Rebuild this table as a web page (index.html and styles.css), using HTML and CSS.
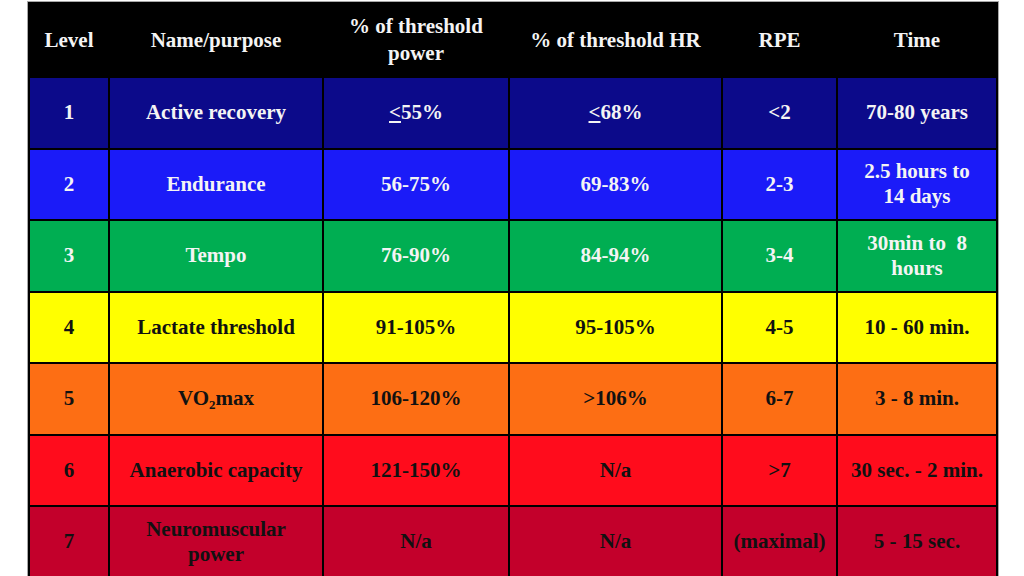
FILE: index.html
```html
<!DOCTYPE html>
<html lang="en">
<head>
<meta charset="utf-8">
<title>Training levels</title>
<link rel="stylesheet" href="styles.css">
</head>
<body>
<div class="frame">
<table class="zones">
<colgroup>
<col class="c-level"><col class="c-name"><col class="c-power"><col class="c-hr"><col class="c-rpe"><col class="c-time">
</colgroup>
<thead>
<tr class="head">
<th>Level</th><th>Name/purpose</th><th>% of threshold<br>power</th><th>% of threshold HR</th><th>RPE</th><th>Time</th>
</tr>
</thead>
<tbody>
<tr class="z1"><td>1</td><td>Active recovery</td><td><u>&lt;</u>55%</td><td><u>&lt;</u>68%</td><td>&lt;2</td><td>70-80 years</td></tr>
<tr class="z2"><td>2</td><td>Endurance</td><td>56-75%</td><td>69-83%</td><td>2-3</td><td>2.5 hours to<br>14 days</td></tr>
<tr class="z3"><td>3</td><td>Tempo</td><td>76-90%</td><td>84-94%</td><td>3-4</td><td>30min to&nbsp; 8<br>hours</td></tr>
<tr class="z4"><td>4</td><td>Lactate threshold</td><td>91-105%</td><td>95-105%</td><td>4-5</td><td>10 - 60 min.</td></tr>
<tr class="z5"><td>5</td><td>VO<sub>2</sub>max</td><td>106-120%</td><td>&gt;106%</td><td>6-7</td><td>3 - 8 min.</td></tr>
<tr class="z6"><td>6</td><td>Anaerobic capacity</td><td>121-150%</td><td>N/a</td><td>&gt;7</td><td>30 sec. - 2 min.</td></tr>
<tr class="z7"><td>7</td><td>Neuromuscular<br>power</td><td>N/a</td><td>N/a</td><td>(maximal)</td><td>5 - 15 sec.</td></tr>
</tbody>
</table>
</div>
</body>
</html>
```
FILE: styles.css
```css
html, body {
  margin: 0;
  padding: 0;
  background: #ffffff;
}
body {
  padding: 1px 0 0 27px;
  font-family: "Liberation Serif", "Times New Roman", serif;
}
.frame {
  display: inline-block;
  border: 1px solid #a8a8a8;
  border-bottom: none;
  line-height: 0;
}
.zones {
  border-collapse: collapse;
  table-layout: fixed;
  width: 968px;
  font-size: 21px;
  font-weight: bold;
  line-height: 25px;
}
.c-level { width: 80px; }
.c-name { width: 214px; }
.c-power { width: 186px; }
.c-hr { width: 213px; }
.c-rpe { width: 115px; }
.c-time { width: 160px; }
.zones th, .zones td {
  border: 2px solid #000;
  text-align: center;
  vertical-align: middle;
  padding: 0;
}
.head th {
  background: #000;
  color: #f4f4f4;
  height: 72px;
  line-height: 27px;
}
.zones td {
  height: 69.5px;
}
.zones sub {
  font-size: 13px;
  line-height: 0;
  vertical-align: -4px;
}
.zones u {
  text-underline-offset: 2px;
}
.z1 td { background: #0c0a8a; color: #f4f4f4; }
.z2 td { background: #1b1bf8; color: #f4f4f4; }
.z3 td { background: #00ae52; color: #f4f4f4; }
.z4 td { background: #ffff00; color: #111; }
.z5 td { background: #fd6e14; color: #111; }
.z6 td { background: #ff0c1c; color: #111; }
.z7 td { background: #c3002b; color: #111; }
```
